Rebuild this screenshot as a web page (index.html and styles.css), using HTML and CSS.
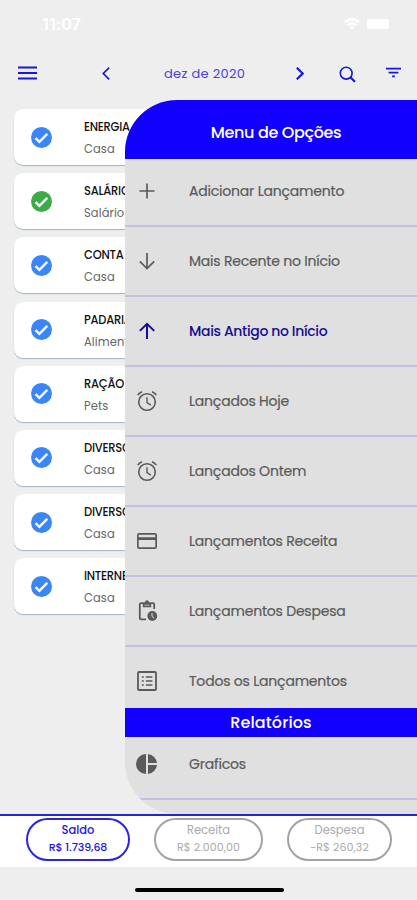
FILE: index.html
```html
<!DOCTYPE html>
<html lang="pt-BR">
<head>
<meta charset="utf-8">
<meta name="viewport" content="width=device-width, initial-scale=1">
<title>Lançamentos</title>
<link rel="stylesheet" href="styles.css">
</head>
<body>
<svg class="defs" width="0" height="0">
  <symbol id="check" viewBox="0 0 24 24"><circle cx="12" cy="12" r="12" fill="currentColor"/><path d="M5.2 12.7l4.4 4.3 9-9.2" fill="none" stroke="#fff" stroke-width="2.7"/></symbol>
  <symbol id="alarm" viewBox="0 0 24 24"><g fill="none" stroke="currentColor"><circle cx="12" cy="13" r="8.3" stroke-width="1.6"/><path d="M12 8.300v5.400l3.900 2.500" stroke-width="1.400"/><path d="M2.700 6.200Q4.200 3.700 7 2.700M21.300 6.200Q19.800 3.700 17 2.700" stroke-width="1.600"/></g></symbol>
</svg>
<div class="app">
  <div class="status">
    <span class="time">11:07</span>
    <svg class="wifi" viewBox="0 0 16 12"><g fill="none" stroke="#fff" stroke-width="2.4"><path d="M1 4.2Q8-1.8 15 4.2M3.7 7.2Q8 3.4 12.3 7.2"/></g><path d="M5.8 9.2Q8 7.5 10.2 9.2L8 11.7z" fill="#fff"/></svg>
    <span class="battery"></span>
  </div>
  <header class="toolbar">
    <svg class="burger" viewBox="0 0 19 14"><path d="M0 1.5h19M0 7h19M0 12.5h19" stroke="currentColor" stroke-width="2"/></svg>
    <svg class="prev" viewBox="0 0 8 13"><path d="M7.2.7L1.3 6.5l5.9 5.8" fill="none" stroke="currentColor" stroke-width="1.7"/></svg>
    <span class="month">dez de 2020</span>
    <svg class="next" viewBox="0 0 8 13"><path d="M.8.7l5.9 5.8-5.9 5.8" fill="none" stroke="currentColor" stroke-width="2.1"/></svg>
    <svg class="search" viewBox="0 0 17 17"><circle cx="7.2" cy="7.2" r="5.9" fill="none" stroke="currentColor" stroke-width="1.6"/><path d="M11 11l5 4.8" stroke="currentColor" stroke-width="2.2"/></svg>
    <svg class="filter" viewBox="0 0 15 11"><path d="M0 1.6h15M2.6 5.6h9.8M6.1 9.4h2.8" stroke="currentColor" stroke-width="1.6"/></svg>
  </header>
  <main class="list">
    <article class="card"><svg class="mark"><use href="#check"/></svg><div><h3>ENERGIA</h3><p>Casa</p></div></article>
    <article class="card"><svg class="mark income"><use href="#check"/></svg><div><h3>SALÁRIO</h3><p>Salário</p></div></article>
    <article class="card"><svg class="mark"><use href="#check"/></svg><div><h3>CONTA</h3><p>Casa</p></div></article>
    <article class="card"><svg class="mark"><use href="#check"/></svg><div><h3>PADARIA</h3><p>Alimentação</p></div></article>
    <article class="card"><svg class="mark"><use href="#check"/></svg><div><h3>RAÇÃO</h3><p>Pets</p></div></article>
    <article class="card"><svg class="mark"><use href="#check"/></svg><div><h3>DIVERSOS</h3><p>Casa</p></div></article>
    <article class="card"><svg class="mark"><use href="#check"/></svg><div><h3>DIVERSOS</h3><p>Casa</p></div></article>
    <article class="card"><svg class="mark"><use href="#check"/></svg><div><h3>INTERNET</h3><p>Casa</p></div></article>
  </main>
  <footer class="totals">
    <div class="pill active"><span>Saldo</span><b>R$ 1.739,68</b></div>
    <div class="pill receipts"><span>Receita</span><b>R$ 2.000,00</b></div>
    <div class="pill expenses"><span>Despesa</span><b>-R$ 260,32</b></div>
  </footer>
  <div class="home"><i></i></div>

  <aside class="drawer">
    <h2 class="title">Menu de Opções</h2>
    <nav>
      <a class="item first"><svg viewBox="0 0 24 24"><path d="M12 4.5v15M4.5 12h15" stroke="currentColor" stroke-width="1.7"/></svg><span>Adicionar Lançamento</span></a>
      <a class="item"><svg viewBox="0 0 24 24"><path d="M12 4v15.5M4.8 12.4l7.2 7.1 7.2-7.1" fill="none" stroke="currentColor" stroke-width="1.7"/></svg><span>Mais Recente no Início</span></a>
      <a class="item selected"><svg viewBox="0 0 24 24"><path d="M12 20V4.8M4.8 11.9L12 4.8l7.2 7.1" fill="none" stroke="currentColor" stroke-width="2"/></svg><span>Mais Antigo no Início</span></a>
      <a class="item"><svg><use href="#alarm"/></svg><span>Lançados Hoje</span></a>
      <a class="item"><svg><use href="#alarm"/></svg><span>Lançados Ontem</span></a>
      <a class="item"><svg viewBox="0 0 24 24"><path fill="currentColor" fill-rule="evenodd" d="M4 4h16a2 2 0 0 1 2 2v12a2 2 0 0 1-2 2H4a2 2 0 0 1-2-2V6a2 2 0 0 1 2-2zm-.3 1.7v2.500h16.600V5.700zm0 5.300v7.300h16.600V11z"/></svg><span>Lançamentos Receita</span></a>
      <a class="item"><svg viewBox="0 0 24 24"><path d="M8.500 4.200H6q-1.200 0-1.200 1.200v13.800q0 1.200 1.200 1.200h5M15.500 4.200H18q1.200 0 1.200 1.200V10M8.700 4v3.300h6.600V4" fill="none" stroke="currentColor" stroke-width="1.800"/><path d="M8.500 3.200H10a2 2 0 0 1 4 0h1.500v2.500h-7z" fill="currentColor"/><circle cx="17.300" cy="17" r="4.900" fill="currentColor"/><path d="M17 14v3.300l2.200 2" fill="none" stroke="#e0e0e0"/></svg><span>Lançamentos Despesa</span></a>
      <a class="item last"><svg viewBox="0 0 24 24"><rect x="3" y="3" width="18" height="18" rx="1" fill="none" stroke="currentColor" stroke-width="1.800"/><path d="M6.800 8h2M6.800 12h2M6.800 16h2M10.800 8h6.600M10.800 12h6.600M10.800 16h6.600" stroke="currentColor" stroke-width="1.700"/></svg><span>Todos os Lançamentos</span></a>
      <h2 class="section">Relatórios</h2>
      <a class="item charts"><svg viewBox="0 0 24 24"><path fill="currentColor" d="M11 2v20a10 10 0 0 1 0-20zm2 0v9h9a10 10 0 0 0-9-9zm0 11v9a10 10 0 0 0 9-9z"/></svg><span>Graficos</span></a>
    </nav>
  </aside>
</div>
</body>
</html>
```
FILE: styles.css
```css
* { box-sizing: border-box; }
body { margin: 0; background: #eee; font-family: Poppins, Inter, "Open Sans", sans-serif; }
h2, h3, p { margin: 0; font-weight: 400; }
svg { display: block; flex: none; }
.defs { position: absolute; }
.app { position: relative; width: 417px; height: 900px; overflow: hidden; display: flex; flex-direction: column; background: #eee; }
.status { height: 48px; display: flex; align-items: center; padding-left: 42px; color: #fff; }
.time { font-family: Inter, sans-serif; font-size: 16px; font-weight: 600; width: 302px; letter-spacing: .2px; }
.wifi { width: 16px; height: 12px; }
.battery { width: 22px; height: 10px; margin-left: 7px; border-radius: 3px; background: #fff; }
.toolbar { height: 61px; display: flex; align-items: flex-start; padding: 18px 0 0 18px; color: #1616dc; }
.burger { width: 19px; height: 14px; }
.prev { width: 8px; height: 13px; margin: 1px 0 0 65px; }
.month { width: 82px; margin-left: 54px; font-size: 13px; line-height: 15px; letter-spacing: .3px; white-space: nowrap; color: #4a42da; }
.next { width: 8px; height: 13px; margin: 1px 0 0 50px; }
.search { width: 17px; height: 17px; margin: 0 0 0 35px; }
.filter { width: 15px; height: 11px; margin: 1px 0 0 30px; }
.list { height: 705px; padding-left: 14px; display: flex; flex-direction: column; gap: 8.2px; }
.card { flex: none; height: 56px; display: flex; align-items: center; padding-left: 17px; background: #fff; border-radius: 9px 0 0 9px; box-shadow: 0 1px 1px #9db9ca; }
.mark { width: 21px; height: 21px; color: #3b86f7; }
.income { color: #3dab49; }
.card div { margin-left: 32px; padding-top: 2px; white-space: nowrap; }
.card h3 { font-size: 11.5px; line-height: 22px; font-weight: 500; letter-spacing: -.25px; color: #111; }
.card p { font-size: 11.5px; line-height: 22px; letter-spacing: .1px; color: #666; }
.totals { height: 53px; display: flex; padding: 2px 0 0 26px; border-top: 2px solid #2424df; background: #fff; }
.pill { width: 104px; height: 43px; display: flex; flex-direction: column; align-items: center; padding-top: 2px; border: 2px solid #a3a3a3; border-radius: 22px; color: #aaa; font-size: 11.5px; line-height: 17px; white-space: nowrap; }
.pill b { font-weight: 400; font-size: 11px; letter-spacing: .1px; }
.active { border-color: #2a24e8; color: #1d16e6; }
.active span { font-weight: 500; }
.active b { font-weight: 500; letter-spacing: -.1px; }
.receipts { width: 109px; margin-left: 24px; }
.expenses { width: 105px; margin-left: 24px; }
.home { flex: 1; display: flex; justify-content: center; padding-top: 21px; }
.home i { width: 149px; height: 4px; margin-left: 1px; border-radius: 2px; background: #000; }
.drawer { position: absolute; left: 125px; top: 100px; width: 292px; height: 714px; overflow: hidden; border-radius: 52px 0 0 52px; background: #e0e0e0; }
.title { height: 58.5px; padding: 8px 0 0 10px; background: #1200ff; color: #fff; font-size: 16px; font-weight: 500; letter-spacing: -.35px; line-height: 50px; text-align: center; }
.item { height: 70px; display: flex; align-items: center; padding-left: 10px; border-bottom: 2px solid #c3c0e4; color: #5a5a5a; font-size: 14px; letter-spacing: -.2px; white-space: nowrap; }
.item svg { width: 24px; height: 24px; }
.item span { margin-left: 30px; -webkit-text-stroke: .2px currentColor; }
.first { height: 68.5px; padding-bottom: 1px; }
.selected { color: #160d91; font-weight: 500; letter-spacing: -.35px; }
.item.selected span { -webkit-text-stroke: 0; }
.last { height: 61px; padding-top: 7px; border: 0; }
.section { height: 29px; background: #1200ff; color: #fff; font-size: 16px; font-weight: 500; letter-spacing: .1px; line-height: 29px; text-align: center; }
.charts { height: 63px; padding-bottom: 7px; }
```
